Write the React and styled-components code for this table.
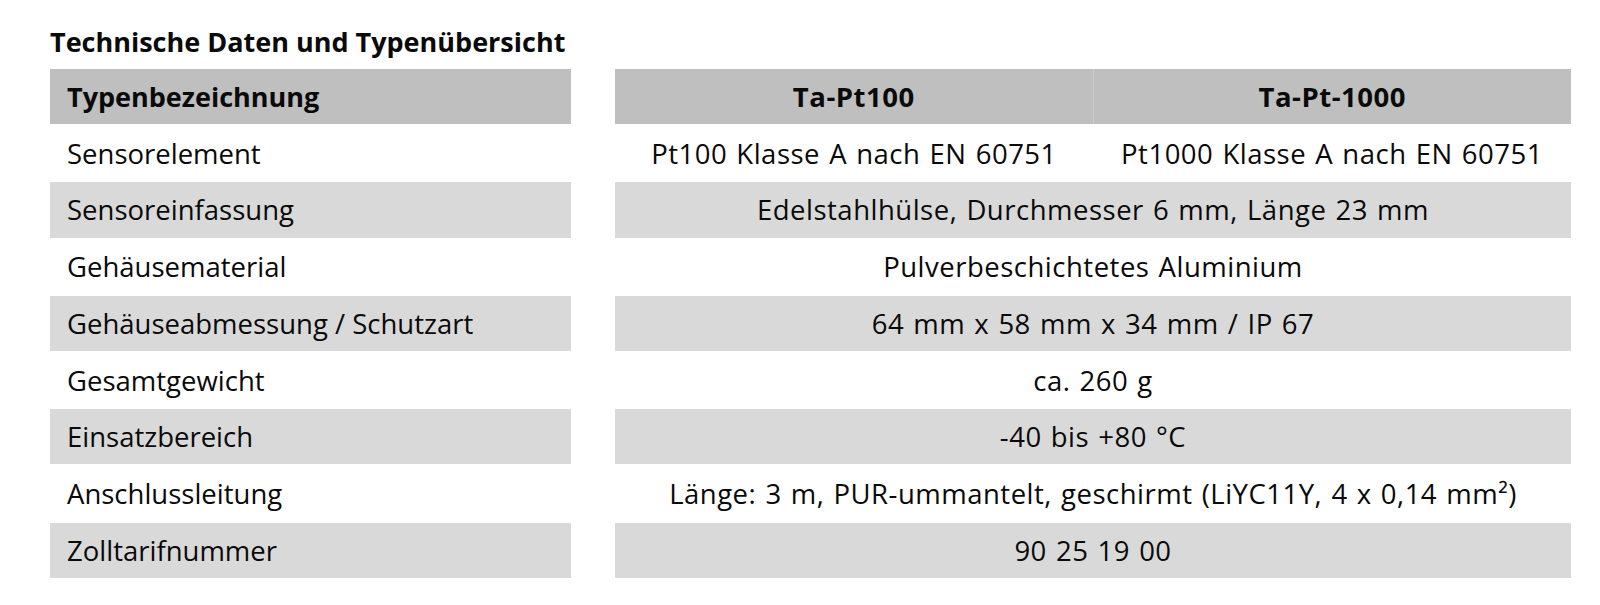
import React from 'react';
import styled, { createGlobalStyle } from 'styled-components';

const GlobalStyle = createGlobalStyle`
  html, body {
    margin: 0;
    padding: 0;
    background: #ffffff;
  }
  body {
    font-family: "Open Sans", Lato, "Liberation Sans", sans-serif;
    color: #0a0a0a;
  }
`;

const Page = styled.div`
  padding: 26px 0 0 50px;
  width: 1521px;
`;

const Title = styled.h2`
  margin: 0 0 11px 0;
  font-size: 27px;
  font-weight: 700;
  line-height: 32px;
`;

const Table = styled.div`
  display: grid;
  row-gap: 1.5px;
`;

const Row = styled.div`
  display: grid;
  grid-template-columns: 521px 956px;
  column-gap: 44px;
  height: 55.2px;
`;

const toneBg = tone => (tone === 'head' ? '#bfbfbf' : tone === 'gray' ? '#d9d9d9' : 'transparent');

const LabelCell = styled.div`
  display: flex;
  align-items: center;
  padding-left: 17px;
  background: ${p => toneBg(p.$tone)};
  font-size: ${p => (p.$tone === 'head' ? '27px' : '27.5px')};
  font-weight: ${p => (p.$tone === 'head' ? 700 : 400)};
`;

const ValueGroup = styled.div`
  display: grid;
  grid-template-columns: ${p => (p.$split ? '1fr 1fr' : '1fr')};
  column-gap: ${p => (p.$split && p.$tone === 'head' ? '1px' : '0')};
  background: ${p => (p.$tone === 'head' ? '#cdcdcd' : 'transparent')};
`;

const ValueCell = styled.div`
  display: flex;
  align-items: center;
  justify-content: center;
  white-space: nowrap;
  background: ${p => toneBg(p.$tone)};
  font-size: 27.5px;
  letter-spacing: 0.5px;
  word-spacing: 1.5px;
  font-weight: ${p => (p.$tone === 'head' ? 700 : 400)};
`;

const rows = [
  { label: 'Sensorelement', values: ['Pt100 Klasse A nach EN 60751', 'Pt1000 Klasse A nach EN 60751'] },
  { label: 'Sensoreinfassung', values: ['Edelstahlhülse, Durchmesser 6 mm, Länge 23 mm'] },
  { label: 'Gehäusematerial', values: ['Pulverbeschichtetes Aluminium'] },
  { label: 'Gehäuseabmessung / Schutzart', values: ['64 mm x 58 mm x 34 mm / IP 67'] },
  { label: 'Gesamtgewicht', values: ['ca. 260 g'] },
  { label: 'Einsatzbereich', values: ['-40 bis +80 °C'] },
  { label: 'Anschlussleitung', values: ['Länge: 3 m, PUR-ummantelt, geschirmt (LiYC11Y, 4 x 0,14 mm²)'] },
  { label: 'Zolltarifnummer', values: ['90 25 19 00'] },
];

export default function App() {
  return (
    <>
      <GlobalStyle />
      <Page>
        <Title>Technische Daten und Typenübersicht</Title>
        <Table>
          <Row>
            <LabelCell $tone="head">Typenbezeichnung</LabelCell>
            <ValueGroup $split $tone="head">
              <ValueCell $tone="head">Ta-Pt100</ValueCell>
              <ValueCell $tone="head">Ta-Pt-1000</ValueCell>
            </ValueGroup>
          </Row>
          {rows.map((r, i) => {
            const tone = i % 2 === 1 ? 'gray' : 'white';
            return (
              <Row key={r.label}>
                <LabelCell $tone={tone}>{r.label}</LabelCell>
                <ValueGroup $split={r.values.length > 1} $tone={tone}>
                  {r.values.map(v => (
                    <ValueCell key={v} $tone={tone}>
                      {v}
                    </ValueCell>
                  ))}
                </ValueGroup>
              </Row>
            );
          })}
        </Table>
      </Page>
    </>
  );
}
